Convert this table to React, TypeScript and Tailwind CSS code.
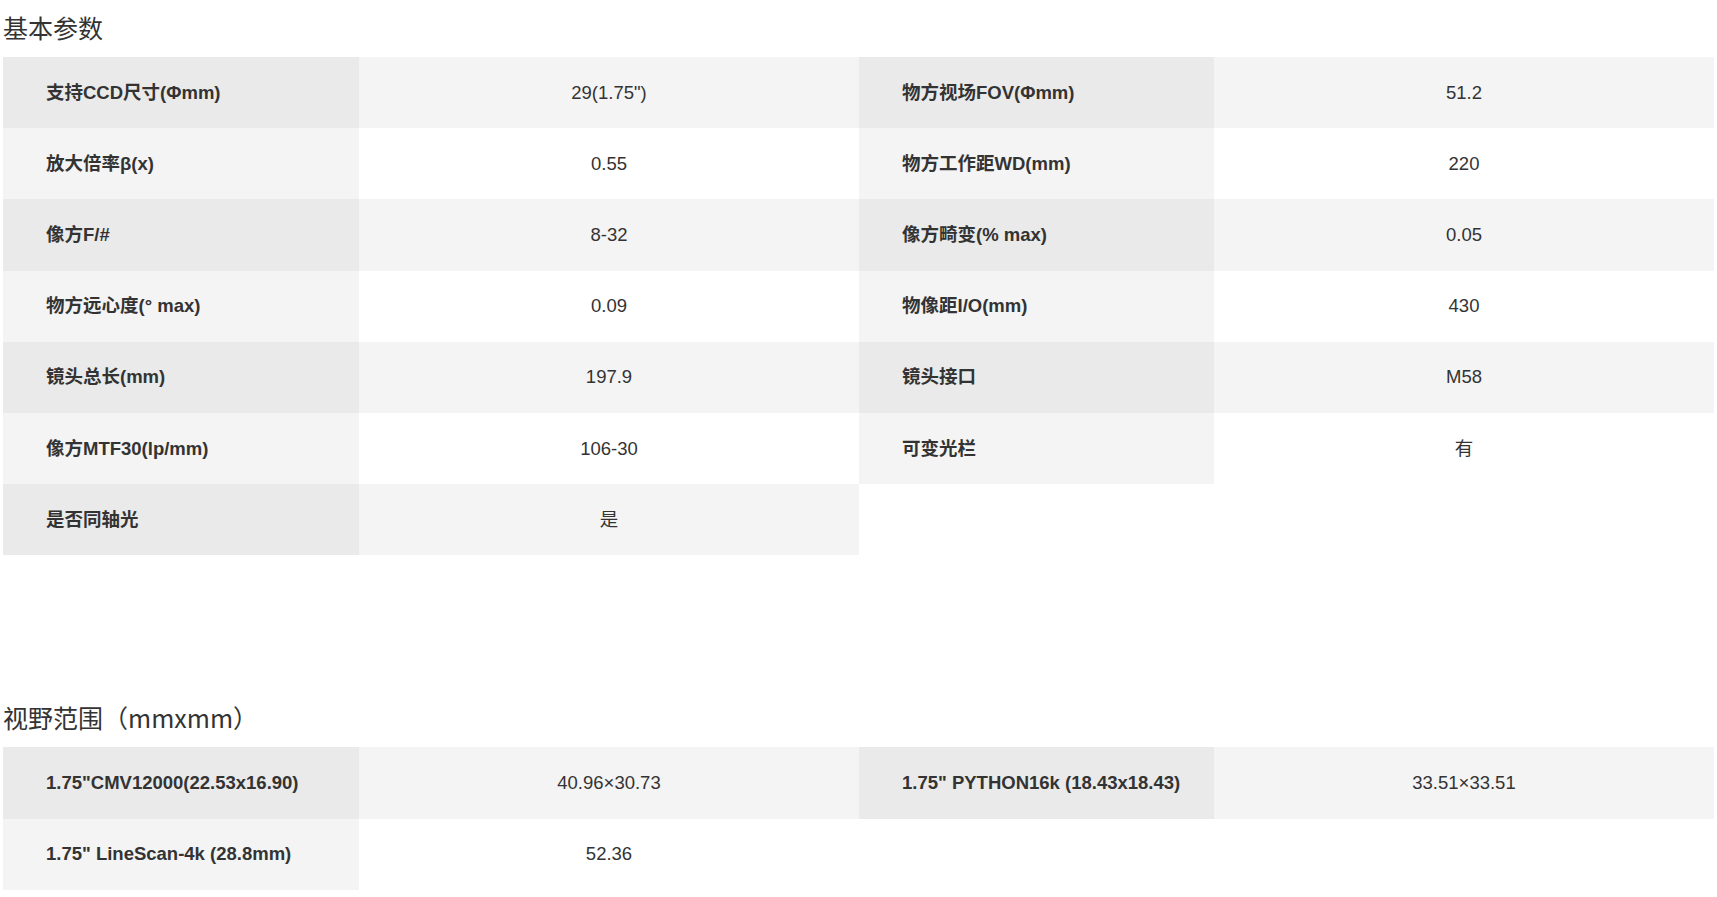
import React from "react";

type Pair = [string, string];
type Row = { left: Pair; right?: Pair };

const basic: Row[] = [
  { left: ["支持CCD尺寸(Φmm)", "29(1.75\")"], right: ["物方视场FOV(Φmm)", "51.2"] },
  { left: ["放大倍率β(x)", "0.55"], right: ["物方工作距WD(mm)", "220"] },
  { left: ["像方F/#", "8-32"], right: ["像方畸变(% max)", "0.05"] },
  { left: ["物方远心度(° max)", "0.09"], right: ["物像距I/O(mm)", "430"] },
  { left: ["镜头总长(mm)", "197.9"], right: ["镜头接口", "M58"] },
  { left: ["像方MTF30(lp/mm)", "106-30"], right: ["可变光栏", "有"] },
  { left: ["是否同轴光", "是"] },
];

const fov: Row[] = [
  { left: ["1.75\"CMV12000(22.53x16.90)", "40.96×30.73"], right: ["1.75\" PYTHON16k (18.43x18.43)", "33.51×33.51"] },
  { left: ["1.75\" LineScan-4k (28.8mm)", "52.36"] },
];

const cellFont = { fontFamily: '"Liberation Sans", "Noto Sans CJK SC", Arial, sans-serif' };

function Cells({ pair, odd }: { pair?: Pair; odd: boolean }) {
  if (!pair) {
    return (
      <>
        <div className="bg-white" />
        <div className="bg-white" />
      </>
    );
  }
  return (
    <>
      <div
        className={`flex items-center pl-[43px] text-[18.5px] font-bold text-[#333] ${odd ? "bg-[#eaeaea]" : "bg-[#f4f4f4]"}`}
        style={cellFont}
      >
        {pair[0]}
      </div>
      <div
        className={`flex items-center justify-center text-[18.5px] text-[#333] ${odd ? "bg-[#f4f4f4]" : "bg-white"}`}
        style={cellFont}
      >
        {pair[1]}
      </div>
    </>
  );
}

function Table({ rows }: { rows: Row[] }) {
  return (
    <div className="grid grid-cols-[356fr_500fr_355fr_500fr] auto-rows-[71.2px]">
      {rows.map((r, i) => (
        <React.Fragment key={i}>
          <Cells pair={r.left} odd={i % 2 === 0} />
          <Cells pair={r.right} odd={i % 2 === 0} />
        </React.Fragment>
      ))}
    </div>
  );
}

export default function App() {
  const headFont = { fontFamily: '"Noto Sans CJK SC", "Liberation Sans", sans-serif' };
  return (
    <div className="bg-white min-h-[897px] w-full px-[3px]">
      <h2 className="pt-[9px] mb-[12px] text-[25px] leading-[36px] font-normal text-[#333]" style={headFont}>
        基本参数
      </h2>
      <Table rows={basic} />
      <h2 className="mt-[144px] mb-[12px] text-[25px] leading-[36px] font-normal text-[#333]" style={headFont}>
        视野范围（mmxmm）
      </h2>
      <Table rows={fov} />
    </div>
  );
}
